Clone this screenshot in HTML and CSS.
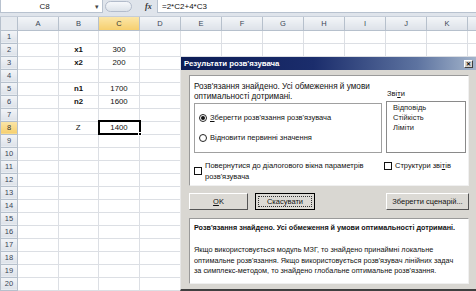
FILE: index.html
```html
<!DOCTYPE html>
<html>
	<head>
		<link rel="stylesheet" href="styles.css">
	</head>
	<body>
		<div class="fbar">
			<div class="namebox">C8<span class="drop">&#9662;</span></div>
			<div class="fbtns"><span class="pill"></span><span class="fx">fx</span></div>
			<div class="formula">=2*C2+4*C3</div>
		</div>
		<table class="sheet">
			<colgroup>
				<col class="rh">
				<col><col class="cb"><col><col><col><col><col><col><col><col><col><col class="cl">
			</colgroup>
			<tr class="head">
				<th class="corner"></th>
				<th>A</th><th>B</th><th class="on">C</th><th>D</th><th>E</th><th>F</th><th>G</th><th>H</th><th>I</th><th>J</th><th>K</th><th></th>
			</tr>
			<tr><th>1</th><td></td><td></td><td></td><td></td><td></td><td></td><td></td><td></td><td></td><td></td><td></td><td></td></tr>
			<tr><th>2</th><td></td><td class="lbl">x1</td><td>300</td><td></td><td></td><td></td><td></td><td></td><td></td><td></td><td></td><td></td></tr>
			<tr><th>3</th><td></td><td class="lbl">x2</td><td>200</td><td></td><td></td><td></td><td></td><td></td><td></td><td></td><td></td><td></td></tr>
			<tr><th>4</th><td></td><td></td><td></td><td></td><td></td><td></td><td></td><td></td><td></td><td></td><td></td><td></td></tr>
			<tr><th>5</th><td></td><td class="lbl">n1</td><td>1700</td><td></td><td></td><td></td><td></td><td></td><td></td><td></td><td></td><td></td></tr>
			<tr><th>6</th><td></td><td class="lbl">n2</td><td>1600</td><td></td><td></td><td></td><td></td><td></td><td></td><td></td><td></td><td></td></tr>
			<tr><th>7</th><td></td><td></td><td></td><td></td><td></td><td></td><td></td><td></td><td></td><td></td><td></td><td></td></tr>
			<tr><th class="on">8</th><td></td><td>Z</td><td class="sel">1400<span class="handle"></span></td><td></td><td></td><td></td><td></td><td></td><td></td><td></td><td></td><td></td></tr>
			<tr><th>9</th><td></td><td></td><td></td><td></td><td></td><td></td><td></td><td></td><td></td><td></td><td></td><td></td></tr>
			<tr><th>10</th><td></td><td></td><td></td><td></td><td></td><td></td><td></td><td></td><td></td><td></td><td></td><td></td></tr>
			<tr><th>11</th><td></td><td></td><td></td><td></td><td></td><td></td><td></td><td></td><td></td><td></td><td></td><td></td></tr>
			<tr><th>12</th><td></td><td></td><td></td><td></td><td></td><td></td><td></td><td></td><td></td><td></td><td></td><td></td></tr>
			<tr><th>13</th><td></td><td></td><td></td><td></td><td></td><td></td><td></td><td></td><td></td><td></td><td></td><td></td></tr>
			<tr><th>14</th><td></td><td></td><td></td><td></td><td></td><td></td><td></td><td></td><td></td><td></td><td></td><td></td></tr>
			<tr><th>15</th><td></td><td></td><td></td><td></td><td></td><td></td><td></td><td></td><td></td><td></td><td></td><td></td></tr>
			<tr><th>16</th><td></td><td></td><td></td><td></td><td></td><td></td><td></td><td></td><td></td><td></td><td></td><td></td></tr>
			<tr><th>17</th><td></td><td></td><td></td><td></td><td></td><td></td><td></td><td></td><td></td><td></td><td></td><td></td></tr>
			<tr><th>18</th><td></td><td></td><td></td><td></td><td></td><td></td><td></td><td></td><td></td><td></td><td></td><td></td></tr>
			<tr><th>19</th><td></td><td></td><td></td><td></td><td></td><td></td><td></td><td></td><td></td><td></td><td></td><td></td></tr>
			<tr><th>20</th><td></td><td></td><td></td><td></td><td></td><td></td><td></td><td></td><td></td><td></td><td></td><td></td></tr>
			<tr><th></th><td></td><td></td><td></td><td></td><td></td><td></td><td></td><td></td><td></td><td></td><td></td><td></td></tr>
		</table>

		<div class="dialog">
			<div class="title">
				<span>Результати розв'язувача</span>
				<span class="close">&#10005;</span>
			</div>
			<div class="dbody">
				<div class="panel">
					<div class="upper">
						<div class="left">
							<div class="msg">Розв'язання знайдено. Усі обмеження й умови оптимальності дотримані.</div>
							<div class="radios">
								<div class="radio"><span class="dot checked"></span><span><u>З</u>берегти розв'язання розв'язувача</span></div>
								<div class="radio"><span class="dot"></span><span>Відновити первинні значення</span></div>
							</div>
						</div>
						<div class="right">
							<div class="rlabel">Зві<u>т</u>и</div>
							<div class="list">
								<div>Відповідь</div>
								<div>Стійкість</div>
								<div>Ліміти</div>
							</div>
						</div>
					</div>
					<div class="checks">
						<div class="check wide"><span class="box"></span><span>Повернутися до діалогового вікна параметрів розв'язувача</span></div>
						<div class="check"><span class="box"></span><span>Структури зві<u>т</u>ів</span></div>
					</div>
				</div>
				<div class="buttons">
					<button class="btn"><u>O</u>K</button>
					<button class="btn def"><span>Скасувати</span></button>
					<button class="btn save">Зберегти сценарій...</button>
				</div>
				<div class="panel info">
					<div class="bold">Розв'язання знайдено. Усі обмеження й умови оптимальності дотримані.</div>
					<div class="note">Якщо використовується модуль МЗГ, то знайдено принаймні локальне оптимальне розв'язання. Якщо використовується розв'язувач лінійних задач за симплекс-методом, то знайдено глобальне оптимальне розв'язання.</div>
				</div>
			</div>
		</div>
	</body>
</html>
```

FILE: styles.css
```css
*{
	margin: 0;
	padding: 0;
	box-sizing: border-box;
}
body{
	width: 476px;
	height: 291px;
	overflow: hidden;
	position: relative;
	background-color: #fff;
	font-family: "Liberation Sans", Arial, sans-serif;
}
.fbar{
	display: flex;
	height: 17px;
	background-color: #dfe4eb;
	border-bottom: 1px solid #c5cdd8;
	padding-bottom: 3px;
}
.namebox{
	width: 103px;
	background-color: #fff;
	border: 1px solid #b8c2cf;
	border-top: none;
	font-size: 8px;
	line-height: 13px;
	text-align: center;
	color: #222;
	position: relative;
	padding-right: 14px;
}
.drop{
	position: absolute;
	right: 3px;
	top: 0;
	font-size: 7px;
	color: #444;
}
.fbtns{
	width: 54px;
	display: flex;
	align-items: center;
	padding-left: 2px;
}
.pill{
	width: 27px;
	height: 11px;
	border: 1px solid #b3bccb;
	border-radius: 6px;
	background: linear-gradient(#f6f8fb, #dde3ea);
}
.fx{
	margin-left: 13px;
	font-family: "Liberation Serif", serif;
	font-style: italic;
	font-weight: bold;
	font-size: 8px;
	color: #333;
}
.formula{
	flex: 1;
	background-color: #fff;
	border-left: 1px solid #b8c2cf;
	border-bottom: 1px solid #b8c2cf;
	font-size: 8px;
	line-height: 13px;
	padding-left: 4px;
	color: #111;
}
.sheet{
	border-collapse: collapse;
	table-layout: fixed;
	width: 480px;
	font-size: 7.8px;
	color: #111;
}
.sheet col{
	width: 41px;
}
.sheet col.rh{
	width: 17px;
}
.sheet col.cb{
	width: 40px;
}
.sheet col.cl{
	width: 13px;
}
.sheet tr{
	height: 13px;
}
.sheet th{
	background: linear-gradient(#f3f5f8, #dde2e9);
	border: 1px solid #b6c0cc;
	font-weight: normal;
	color: #3a4656;
	font-size: 7.5px;
	padding: 0;
}
.sheet .head th{
	border-top: none;
}
.sheet th.on{
	background: linear-gradient(#fbe6a8, #f6cf6e);
	color: #333;
}
.sheet th.corner{
	background: #e6eaef;
}
.sheet td{
	border: 1px solid #dcdfe4;
	text-align: center;
	padding: 0;
	height: 13px;
	line-height: 11px;
}
.sheet td.lbl{
	font-weight: bold;
}
.sheet td.sel{
	border: 2px solid #000;
	position: relative;
}
.handle{
	position: absolute;
	right: -3px;
	bottom: -3px;
	width: 4px;
	height: 4px;
	background-color: #000;
	border: 1px solid #fff;
}

.dialog{
	position: absolute;
	left: 180px;
	top: 57px;
	width: 296px;
	height: 234px;
	background-color: #d9d7d2;
	border-bottom: 2px solid #404040;
	border-left: 1px solid #e8e8e8;
	font-size: 7.5px;
	color: #111;
}
.title{
	height: 13px;
	background: linear-gradient(to right, #0c1c55, #1b2d6c 45%, #5d73a0 80%, #a3b4cb);
	color: #fff;
	font-weight: bold;
	font-size: 7.8px;
	line-height: 13px;
	padding-left: 3px;
	display: flex;
	justify-content: space-between;
	align-items: center;
}
.close{
	width: 9px;
	height: 8px;
	margin-right: 3px;
	background-color: #d6d3ce;
	border: 1px solid;
	border-color: #fff #404040 #404040 #fff;
	color: #000;
	font-size: 6px;
	line-height: 6px;
	text-align: center;
	font-weight: bold;
}
.dbody{
	padding: 5px 7px 0 8px;
}
.panel{
	background-color: #fff;
	border: 1px solid #9a9a9a;
	border-right-color: #f0f0f0;
	border-bottom-color: #f0f0f0;
}
.panel:first-child{
	height: 111px;
	padding: 6px 0 0 4px;
}
.upper{
	display: flex;
}
.left{
	width: 188px;
}
.msg{
	font-size: 8.2px;
	line-height: 10px;
	height: 21px;
	padding-right: 6px;
}
.radios{
	height: 50px;
	border: 1px solid #a0a0a0;
	padding: 8px 0 0 4px;
}
.radio{
	display: flex;
	align-items: center;
	height: 11px;
	margin-bottom: 9px;
	gap: 3px;
}
.dot{
	width: 8px;
	height: 8px;
	border: 1px solid #222;
	border-radius: 50%;
	position: relative;
}
.dot.checked::after{
	content: "";
	position: absolute;
	left: 1px;
	top: 1px;
	width: 4px;
	height: 4px;
	border-radius: 50%;
	background-color: #111;
}
.right{
	margin-left: 4px;
	width: 80px;
	padding-top: 7px;
}
.rlabel{
	line-height: 10px;
	height: 12px;
	padding-left: 1px;
}
.list{
	height: 52px;
	border: 1px solid #8a8a8a;
	padding: 1px 0 0 6px;
	line-height: 10px;
	color: #222;
}
.checks{
	display: flex;
	margin-top: 7px;
	align-items: flex-start;
}
.check{
	display: flex;
	align-items: center;
	gap: 3px;
	line-height: 11px;
}
.check.wide{
	width: 190px;
	padding-right: 14px;
}
.box{
	flex: none;
	width: 8px;
	height: 8px;
	border: 1px solid #111;
	background-color: #fff;
}
.buttons{
	display: flex;
	margin-top: 7px;
	height: 17px;
}
.btn{
	width: 59px;
	height: 17px;
	background-color: #dcdad5;
	border: 1px solid;
	border-color: #fff #555 #555 #fff;
	font-family: "Liberation Sans", Arial, sans-serif;
	font-size: 7.5px;
	color: #111;
}
.btn.def{
	margin-left: 7px;
	width: 60px;
	border: 1px solid #000;
	padding: 2px;
}
.btn.def span{
	display: block;
	border: 1px dotted #333;
	line-height: 9px;
}
.btn.save{
	margin-left: auto;
	width: 83px;
	margin-right: 0;
}
.panel.info{
	margin-top: 8px;
	height: 66px;
	padding: 4px 0 0 4px;
}
.bold{
	font-weight: bold;
	font-size: 7.2px;
	line-height: 10px;
}
.note{
	margin-top: 12px;
	line-height: 10.5px;
	font-size: 7.3px;
	padding-right: 8px;
}
```
